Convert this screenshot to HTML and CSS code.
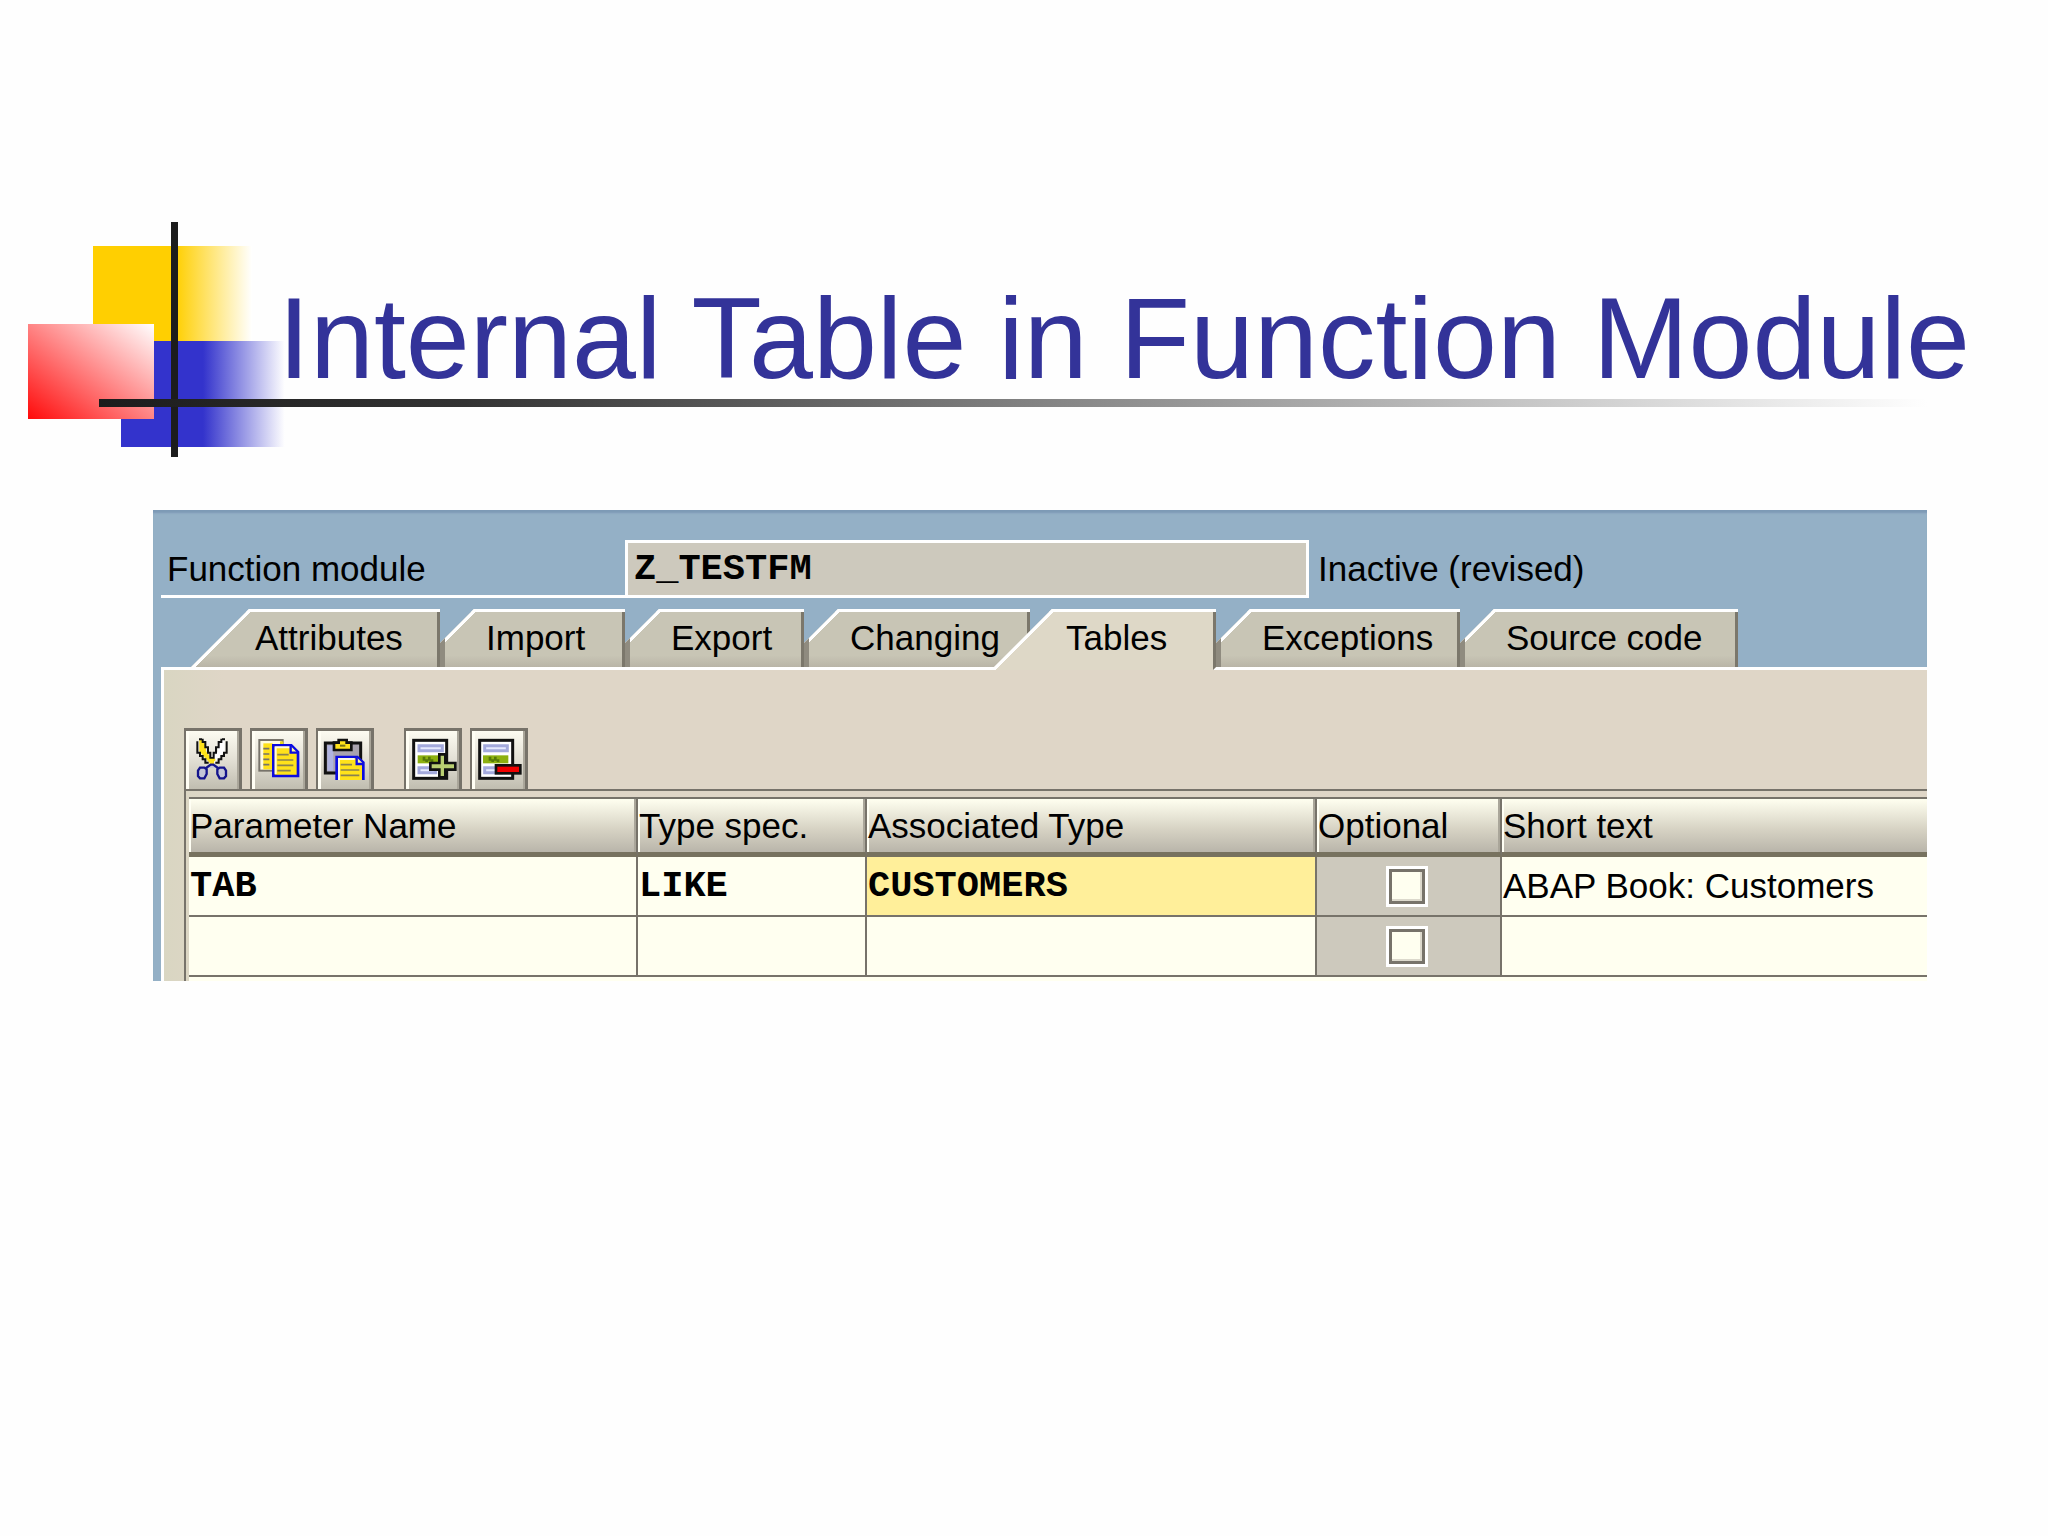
FILE: index.html
```
<!DOCTYPE html>
<html lang="en">
<head>
    <title>Internal Table in Function Module</title>
    <meta charset="utf-8">
    <link rel="stylesheet" href="styles.css">
</head>
<body>
    <!-- slide title -->
    <header class="slide-header">
        <svg class="logo" viewBox="0 0 257 235" aria-hidden="true">
            <defs>
                <linearGradient id="yellow">
                    <stop offset="0.52" stop-color="#ffcf01"/>
                    <stop offset="1" stop-color="#fff"/>
                </linearGradient>
                <linearGradient id="blue">
                    <stop offset="0.5" stop-color="#3333cc"/>
                    <stop offset="1" stop-color="#fff"/>
                </linearGradient>
                <linearGradient id="red" x1="0" y1="1" x2="1" y2="0">
                    <stop offset="0" stop-color="#ff0a0a"/>
                    <stop offset="1" stop-color="#fff"/>
                </linearGradient>
            </defs>
            <rect x="65" y="24" width="159" height="95" fill="url(#yellow)"/>
            <rect x="93" y="119" width="164" height="106" fill="url(#blue)"/>
            <rect x="0" y="102" width="126" height="95" fill="url(#red)"/>
            <rect x="143" y="0" width="7" height="235" fill="#1c1c1c"/>
        </svg>
        <h1>Internal Table in Function Module</h1>
        <div class="rule"></div>
    </header>

    <!-- function builder screen -->
    <main class="screen">
        <div class="module-row">
            <label for="module">Function module</label>
            <input id="module" type="text" value="Z_TESTFM" readonly>
            <span class="status">Inactive (revised)</span>
        </div>

        <nav class="tabs">
            <button class="tab first">Attributes</button>
            <button class="tab">Import</button>
            <button class="tab">Export</button>
            <button class="tab">Changing</button>
            <button class="tab active">Tables</button>
            <button class="tab">Exceptions</button>
            <button class="tab">Source code</button>
        </nav>

        <section class="tab-body">
            <div class="grid-area">
                <div class="toolbar">
                    <button aria-label="Cut">
                        <svg viewBox="12 12 174 183">
                            <path d="M58 48V82L92 120L98 108L78 82V66L66 48Z" fill="#ffe21a"/>
                            <path d="M134 48V82L100 120L94 108L114 82V66L126 48Z" fill="#fff"/>
                            <path d="M68 44V54H76V70H84V86H91V102H97V108M52 52V86H60V96H68V106H76V116H86M124 44V54H116V70H108V86H101V102H95M140 52V86H132V96H124V106H116V116H106" fill="none" stroke="#111" stroke-width="6"/>
                            <path d="M66 46h-9M126 46h9" stroke="#111" stroke-width="6"/>
                            <path d="M86 104h20v8h-4v8h-12v-8h-4z" fill="#ffe21a"/>
                            <path d="M54 140V156L60 163H73L80 150V136L73 131H60ZM138 140V156L132 163H119L112 150V136L119 131H132ZM78 132L92 122H100L114 132" fill="#c4c6d6" stroke="#14148c" stroke-width="7"/>
                        </svg>
                    </button>
                    <button aria-label="Copy">
                        <svg viewBox="210 12 174 183">
                            <rect x="238" y="48" width="70" height="92" fill="#fffbe0" stroke="#77736a" stroke-width="6"/>
                            <path d="M250 58h28v78h-28z" fill="#ffe21a"/>
                            <path d="M250 74h18M250 90h18M250 106h18M250 122h18" stroke="#77736a" stroke-width="5"/>
                            <path d="M280 64H334L354 84V156H280Z" fill="#ffe21a" stroke="#0c0ce0" stroke-width="8"/>
                            <path d="M287 150V70H330" fill="none" stroke="#fffbe0" stroke-width="6"/>
                            <path d="M332 66V86H352" fill="#fff8a0" stroke="#0c0ce0" stroke-width="7"/>
                            <path d="M292 92h34M292 108h48M292 124h48M292 140h40" stroke="#8a8250" stroke-width="5"/>
                            <path d="M300 52h10v8h-10z" fill="#e6d81a"/>
                        </svg>
                    </button>
                    <button aria-label="Paste">
                        <svg viewBox="408 12 174 183">
                            <rect x="436" y="57" width="106" height="90" fill="#a9a3ae" stroke="#111" stroke-width="9"/>
                            <path d="M442 64h18v76h-18z" fill="#b0b4e0"/>
                            <path d="M462 56H476V48H500V56H514V78H462Z" fill="#ffe21a" stroke="#111" stroke-width="8"/>
                            <path d="M480 62h16v6h-16z" fill="#77731a"/>
                            <path d="M470 168V99H532L550 116V168" fill="#ffe21a" stroke="#0c0ce0" stroke-width="8"/>
                            <path d="M477 168V105H524" fill="none" stroke="#fffbe0" stroke-width="6"/>
                            <path d="M530 100V120H550" fill="#fff8a0" stroke="#0c0ce0" stroke-width="7"/>
                            <path d="M482 122h34M482 138h56M482 154h56" stroke="#8a8250" stroke-width="5"/>
                        </svg>
                    </button>
                    <button class="group" aria-label="Insert row">
                        <svg viewBox="12 12 174 183">
                            <rect x="41" y="49" width="99" height="114" fill="#fff" stroke="#111" stroke-width="9"/>
                            <path d="M57 65h70v15h-70zM57 131h50v15h-50z" fill="#e6eaff" stroke="#a3a9dc" stroke-width="9"/>
                            <path d="M53 94h82v24h-82z" fill="#8db010"/>
                            <path d="M68 98h8v8h8v-8h8v8h8v8h-8v-4h-8v4h-8v-4h-8z" fill="#567808"/>
                            <path d="M118 91H136V117H166V137H136V160H118V137H91V117H118Z" fill="#b9cf72" stroke="#111" stroke-width="8"/>
                        </svg>
                    </button>
                    <button aria-label="Delete row">
                        <svg viewBox="212 12 174 183">
                            <rect x="241" y="49" width="99" height="114" fill="#fff" stroke="#111" stroke-width="9"/>
                            <path d="M256 65h68v15h-68zM256 131h50v15h-50z" fill="#e6eaff" stroke="#a3a9dc" stroke-width="9"/>
                            <path d="M251 94h76v24h-76z" fill="#8db010"/>
                            <path d="M268 98h8v8h8v-8h8v8h8v8h-8v-4h-8v4h-8v-4h-8z" fill="#567808"/>
                            <rect x="290" y="124" width="73" height="24" fill="#f00000" stroke="#111" stroke-width="8"/>
                        </svg>
                    </button>
                </div>

                <table>
                    <colgroup>
                        <col class="col-name">
                        <col class="col-spec">
                        <col class="col-type">
                        <col class="col-optional">
                        <col class="col-text">
                    </colgroup>
                    <thead>
                        <tr>
                            <th>Parameter Name</th>
                            <th>Type spec.</th>
                            <th>Associated Type</th>
                            <th>Optional</th>
                            <th>Short text</th>
                        </tr>
                    </thead>
                    <tbody>
                        <tr>
                            <td class="code">TAB</td>
                            <td class="code">LIKE</td>
                            <td class="code current">CUSTOMERS</td>
                            <td class="optional"><input type="checkbox" aria-label="Optional, TAB"></td>
                            <td>ABAP Book: Customers</td>
                        </tr>
                        <tr>
                            <td></td>
                            <td></td>
                            <td></td>
                            <td class="optional"><input type="checkbox" aria-label="Optional, empty row"></td>
                            <td></td>
                        </tr>
                    </tbody>
                </table>
            </div>
        </section>
    </main>
</body>
</html>
```
FILE: styles.css
```
* {
    box-sizing: border-box;
}

body {
    margin: 0;
    background: #fefefe;
    color: #000;
    font-family: "Liberation Sans", Arial, sans-serif;
    font-size: 35px;
    line-height: 40px;
}

button, input {
    font: inherit;
    color: inherit;
    border: 0;
    border-radius: 0;
    margin: 0;
    padding: 0;
}

/* title */
.slide-header {
    position: relative;
    padding: 274px 0 108px 278px;
}

.logo {
    position: absolute;
    left: 28px;
    top: 222px;
    width: 257px;
    height: 235px;
}

h1 {
    position: relative;
    margin: 0;
    color: #333399;
    font-size: 115px;
    line-height: 128px;
    font-weight: normal;
    white-space: nowrap;
}

.rule {
    position: absolute;
    left: 99px;
    right: 121px;
    top: 399px;
    height: 8px;
    background: linear-gradient(to right, #1c1c1c, #333 20%, #fefefe 100%);
}

/* screen */
.screen {
    margin: 0 121px 0 153px;
    padding: 30px 0 0 8px;
    background: #94b0c6;
    box-shadow: inset 0 4px 2px -1px #7d9ab6;
}

.module-row {
    display: grid;
    grid-template-columns: 464fr 684fr 618fr;
    height: 58px;
}

.module-row label {
    padding: 9px 0 0 6px;
    border-bottom: 3px solid #fff;
}

.module-row input {
    min-width: 0;
    padding: 0 6px;
    background: #cdc9bd;
    border: 3px solid #fff;
    font-family: "Liberation Mono", "Courier New", monospace;
    font-size: 37px;
    font-weight: bold;
}

.status {
    padding: 9px 0 0 9px;
}

/* tabs */
.tabs {
    display: grid;
    grid-template-columns: 249fr 185fr 179fr 226fr 186fr 244fr 278fr 189fr;
    height: 58px;
    margin-top: 11px;
    padding-left: 30px;
}

.tab {
    min-width: 0;
    height: 58px;
    padding: 0 0 0 46px;
    text-align: left;
    white-space: nowrap;
    background: linear-gradient(135deg, #fff 27px, transparent 27px), linear-gradient(#c8c5b5 80%, #b9b5a7);
    box-shadow: inset 0 3px #fff, inset -3px 0 #7b776b, inset 5px 0 #8f8b7f;
    clip-path: polygon(34px 0, 100% 0, 100% 100%, 0 100%, 0 34px);
}

.tab.first {
    padding-left: 64px;
    background: linear-gradient(135deg, #fff 44px, transparent 44px), linear-gradient(#c8c5b5 80%, #b9b5a7);
    box-shadow: inset 0 3px #fff, inset -3px 0 #7b776b;
    clip-path: polygon(58px 0, 100% 0, 100% 100%, 0 100%, 0 58px);
}

/* runs over the white line and the tab before it */
.tab.active {
    position: relative;
    z-index: 1;
    height: 61px;
    margin-left: -36px;
    padding: 0 0 3px 72px;
    background: linear-gradient(135deg, #fff 44px, transparent 44px), #ded8c7;
    box-shadow: inset 0 3px #fff, inset -3px 0 #7b776b;
    clip-path: polygon(58px 0, 100% 0, 100% 58px, calc(100% - 3px) 100%, 0 100%, 0 58px);
}

.tab-body {
    padding: 58px 0 0 20px;
    background: linear-gradient(to right, #d9d6c2, #dfd6c7 60px);
    border-top: 3px solid #fff;
    border-left: 3px solid #fff;
}

.grid-area {
    border-left: 2px solid #77736a;
}

/* toolbar */
.toolbar {
    display: flex;
    gap: 8px;
    margin-bottom: 6px;
    border-bottom: 2px solid #77736a;
}

.toolbar button {
    width: 58px;
    height: 61px;
    background: linear-gradient(#fffef4, #e4e1d6 50%, #c0bdb0);
    box-shadow: inset 0 3px #77736a, inset -3px 0 #77736a, inset 2px 0 #77736a, inset 5px 0 #fffef4, inset -5px 0 #aaa69a;
}

.toolbar button:first-child {
    margin-left: -2px;
}

.toolbar .group {
    margin-left: 22px;
}

.toolbar svg {
    display: block;
    width: 58px;
    height: 61px;
}

/* parameter table */
table {
    width: calc(100% - 3px);
    margin-left: 3px;
    padding-bottom: 4px;
    table-layout: fixed;
    border-spacing: 0;
    background: #fffff0;
}

.col-name { width: 449px; }
.col-spec { width: 229px; }
.col-type { width: 450px; }
.col-optional { width: 185px; }

th {
    padding: 7px 0 6px 1px;
    text-align: left;
    font-weight: normal;
    white-space: nowrap;
    background: linear-gradient(#fffff0, #d8d4c5 55%, #b9b5aa);
    border-top: 2px solid #77736a;
    border-bottom: 5px solid #77725f;
    border-right: 2px solid #77736a;
    box-shadow: inset 2px 0 #fffff4, inset -2px 0 #aaa69a;
}

td {
    height: 60px;
    padding: 9px 0 9px 1px;
    vertical-align: top;
    white-space: nowrap;
    background: #fffff0;
    border-right: 2px solid #77736a;
    border-bottom: 2px solid #77736a;
}

th:last-child, td:last-child {
    border-right: 0;
}

th:last-child {
    box-shadow: inset 2px 0 #fffff4;
}

.code {
    font-family: "Liberation Mono", "Courier New", monospace;
    font-size: 37px;
    font-weight: bold;
}

.current {
    background: #ffef9a;
}

.optional {
    padding: 9px 3px 8px 0;
    background: #cdc9bd;
}

.optional input {
    appearance: none;
    display: block;
    width: 42px;
    height: 41px;
    margin: 0 auto;
    background: #fffff0;
    border: 3px solid #fff;
    box-shadow: inset 0 0 0 3px #77736a, inset -5px -5px #dcd9cc;
}

.optional input:checked {
    background: #77736a;
}
```
